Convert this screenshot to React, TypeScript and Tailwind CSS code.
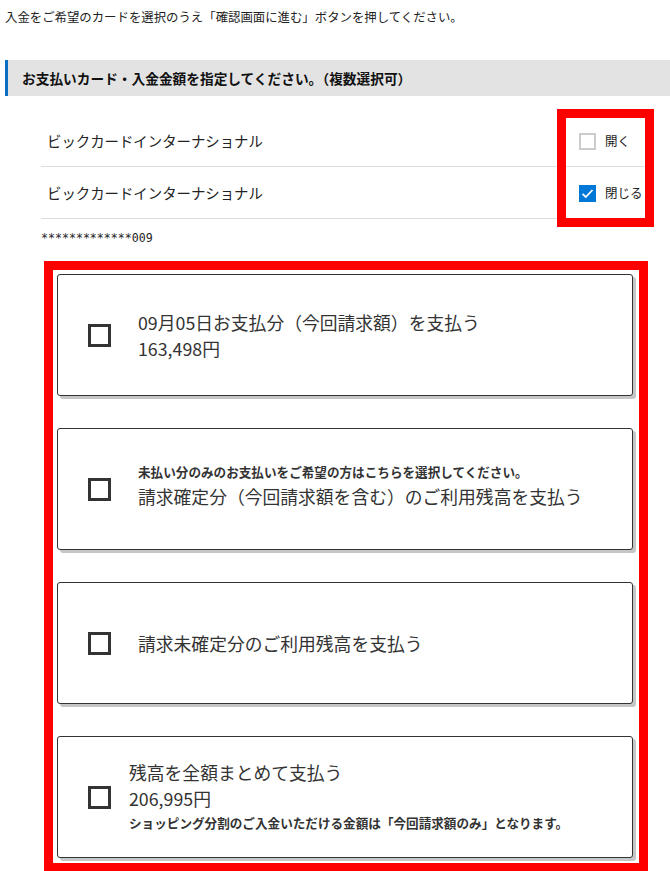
import React from "react";

type Option = {
  note?: string;
  title: string;
  amount?: string;
  footnote?: string;
  indent: string;
};

const options: Option[] = [
  { title: "09月05日お支払分（今回請求額）を支払う", amount: "163,498円", indent: "ml-[27px]" },
  {
    note: "未払い分のみのお支払いをご希望の方はこちらを選択してください。",
    title: "請求確定分（今回請求額を含む）のご利用残高を支払う",
    indent: "ml-[27px] mb-[8px]",
  },
  { title: "請求未確定分のご利用残高を支払う", indent: "ml-[27px]" },
  {
    title: "残高を全額まとめて支払う",
    amount: "206,995円",
    footnote: "ショッピング分割のご入金いただける金額は「今回請求額のみ」となります。",
    indent: "ml-[18px]",
  },
];

const CardRow = ({ label, open }: { label: string; open: boolean }) => (
  <div className="flex items-center h-[51px] border-b border-[#dddddd] pl-[6px]">
    <span className="flex-1 text-[14.4px] text-[#222]">{label}</span>
    <div className="w-[75px] flex items-center gap-[9px]">
      {open ? (
        <span className="w-[17px] h-[17px] border-2 border-[#cccccc] bg-white" />
      ) : (
        <span className="w-[17px] h-[17px] bg-[#0078d7] flex items-center justify-center">
          <svg width="13" height="13" viewBox="0 0 13 13" fill="none">
            <path d="M1.5 6.8 L4.8 10 L11.5 3" stroke="white" strokeWidth="1.8" />
          </svg>
        </span>
      )}
      <span className="text-[12.5px] text-[#222]">{open ? "開く" : "閉じる"}</span>
    </div>
  </div>
);

export default function App() {
  return (
    <div className="w-[670px] min-h-[871px] bg-white text-[#333] font-['Noto_Sans_CJK_JP',sans-serif] overflow-hidden">
      <p className="pl-[5px] pt-[9px] text-[12.4px] leading-[16px] text-[#222]">
        入金をご希望のカードを選択のうえ「確認画面に進む」ボタンを押してください。
      </p>

      <div className="mt-[35px] ml-[5px] h-[36px] bg-[#e3e3e3] border-l-[3px] border-[#0a6fc2] flex items-center pl-[14px]">
        <h2 className="text-[13.7px] font-bold text-[#111]">
          お支払いカード・入金金額を指定してください。（複数選択可）
        </h2>
      </div>

      <div className="relative mt-[20px] ml-[41px] w-[613px]">
        <div className="h-[52px] flex flex-col">
          <CardRow label="ビックカードインターナショナル" open />
        </div>
        <CardRow label="ビックカードインターナショナル" open={false} />
        <div className="absolute left-[516px] top-[-7px] w-[97px] h-[118px] border-[9px] border-[#ff0000]" />
      </div>

      <p className="mt-[12px] ml-[41px] font-['DejaVu_Sans_Mono',monospace] text-[11.6px] leading-[14px] text-[#222]">
        *************009
      </p>

      <div className="mt-[16px] ml-[44px] w-[604px] border-[9px] border-[#ff0000] pt-[4px] pl-[4px] pr-[6px] pb-[5px] flex flex-col gap-[32px]">
        {options.map((o, i) => (
          <div
            key={i}
            className="h-[122px] bg-white border border-[#333] rounded-[3px] shadow-[3px_3px_0_#c6c6c6] flex items-center"
          >
            <span className="ml-[30px] w-[23px] h-[23px] border-[3px] border-[#333] shrink-0" />
            <div className={`${o.indent} flex flex-col`}>
              {o.note && <span className="text-[12.6px] leading-[22px] font-bold">{o.note}</span>}
              <span className="text-[17.8px] leading-[26px]">{o.title}</span>
              {o.amount && <span className="text-[17.8px] leading-[26px]">{o.amount}</span>}
              {o.footnote && <span className="text-[12.6px] leading-[24px] font-bold">{o.footnote}</span>}
            </div>
          </div>
        ))}
      </div>
    </div>
  );
}
